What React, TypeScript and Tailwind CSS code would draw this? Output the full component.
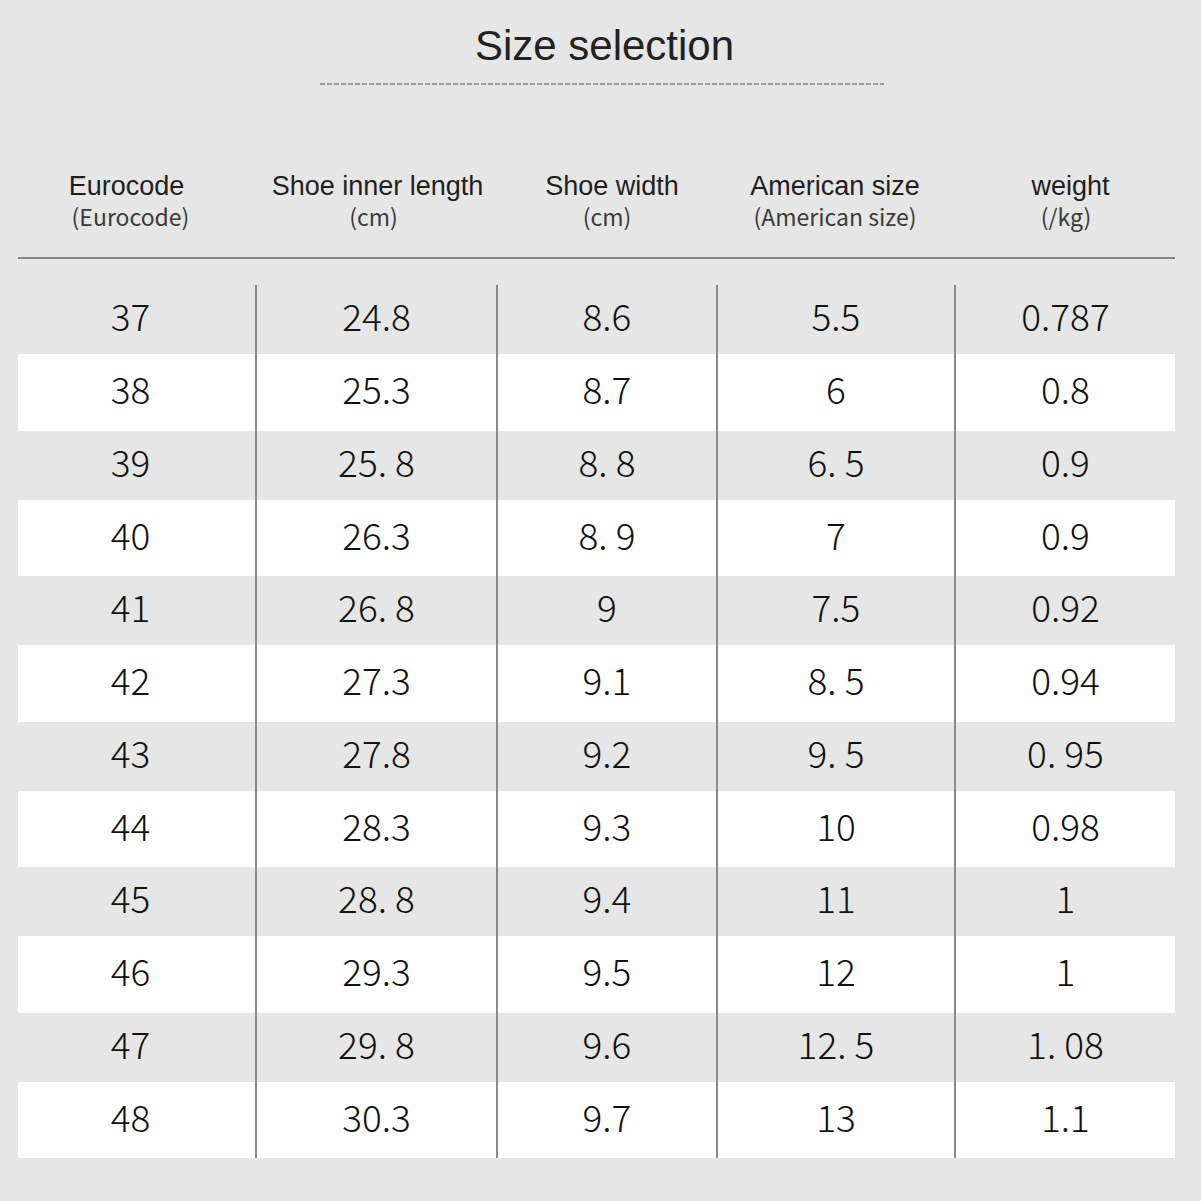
import React from "react";

const rows: string[][] = [
  ["37", "24.8", "8.6", "5.5", "0.787"],
  ["38", "25.3", "8.7", "6", "0.8"],
  ["39", "25. 8", "8. 8", "6. 5", "0.9"],
  ["40", "26.3", "8. 9", "7", "0.9"],
  ["41", "26. 8", "9", "7.5", "0.92"],
  ["42", "27.3", "9.1", "8. 5", "0.94"],
  ["43", "27.8", "9.2", "9. 5", "0. 95"],
  ["44", "28.3", "9.3", "10", "0.98"],
  ["45", "28. 8", "9.4", "11", "1"],
  ["46", "29.3", "9.5", "12", "1"],
  ["47", "29. 8", "9.6", "12. 5", "1. 08"],
  ["48", "30.3", "9.7", "13", "1.1"],
];

const headers: { t: string; s: string; cls: string; scls: string }[] = [
  { t: "Eurocode", s: "(Eurocode)", cls: "pr-[20px]", scls: "pr-[12px]" },
  { t: "Shoe inner length", s: "(cm)", cls: "pl-[4px]", scls: "pr-[4px]" },
  { t: "Shoe width", s: "(cm)", cls: "pl-[12px]", scls: "pl-[2px]" },
  { t: "American size", s: "(American size)", cls: "", scls: "" },
  { t: "weight", s: "(/kg)", cls: "pl-[12px]", scls: "pl-[3px]" },
];

export default function App() {
  return (
    <div className="w-[1201px] h-[1201px] bg-[#e6e6e6] flex flex-col items-center overflow-hidden">
      <div className="pt-[25px] h-[67px] ml-[8px] text-[42px] leading-[42px] text-[#222] font-['Liberation_Sans',Arial,sans-serif]">
        Size selection
      </div>
      <div className="mt-[16px] ml-[2px] w-[564px] h-[2px] bg-[repeating-linear-gradient(90deg,#9c9c9c_0_5px,transparent_5px_7px)]" />
      <div className="self-start ml-[18px] w-[1157px] mt-[86px] grid grid-cols-[237px_241px_220px_238px_221px] pb-[26px] border-b-2 border-[#858585]">
        {headers.map((h) => (
          <div key={h.t} className="flex flex-col items-center">
            <div className={`${h.cls} text-[27px] leading-[30px] text-[#1e1e1e] font-['Liberation_Sans',Arial,sans-serif]`}>
              {h.t}
            </div>
            <div className={`${h.scls} text-[23px] leading-[30px] text-[#3a3a3a] font-['Noto_Sans_CJK_SC','Noto_Sans',sans-serif]`}>
              {h.s}
            </div>
          </div>
        ))}
      </div>
      <div className="self-start ml-[18px] w-[1157px] mt-[26px] flex flex-col">
        {rows.map((r, i) => (
          <div
            key={r[0]}
            className={`grid grid-cols-[237px_241px_220px_238px_221px] ${
              i % 2 === 0 ? "h-[69px]" : "h-[76.5px] bg-white"
            }`}
          >
            {r.map((c, j) => (
              <div
                key={j}
                className={`flex items-center justify-center pb-[7px] whitespace-pre text-[37px] font-light text-[#111] font-['Noto_Sans_CJK_SC','Noto_Sans',sans-serif] ${
                  j > 0 ? "border-l-2 border-[#8a8a8a]" : "pr-[12px]"
                }`}
              >
                {c}
              </div>
            ))}
          </div>
        ))}
      </div>
    </div>
  );
}
